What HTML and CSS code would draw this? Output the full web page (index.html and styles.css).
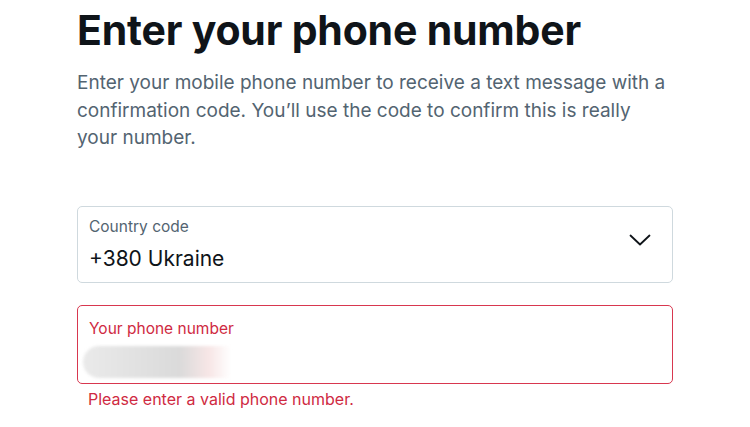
FILE: index.html
```html
<!DOCTYPE html>
<html lang="en">
<head>
  <meta charset="UTF-8" />
  <meta name="viewport" content="width=device-width, initial-scale=1.0" />
  <title>Enter your phone number</title>
  <link rel="stylesheet" href="styles.css">
</head>
<body>
  <div class="page">
    <h1 class="title">Enter your phone number</h1>
    <p class="lead">Enter your mobile phone number to receive a text message with a confirmation code. You’ll use the code to confirm this is really your number.</p>

    <!-- Country select -->
    <div class="field">
      <div class="field-body">
        <div class="field-label">Country code</div>
        <div class="field-value">+380 Ukraine</div>
      </div>
      <svg class="chevron" viewBox="0 0 24 24" width="24" height="24">
        <path d="M2.5 7.5 L12 16.5 L21.5 7.5" fill="none" stroke="#0f1419" stroke-width="1.8" stroke-linecap="round" stroke-linejoin="round"/>
      </svg>
    </div>

    <!-- Phone input (invalid) -->
    <div class="field field-error">
      <div class="field-body">
        <div class="field-label">Your phone number</div>
        <div class="field-value"><span class="masked"></span></div>
      </div>
    </div>
    <div class="error-msg">Please enter a valid phone number.</div>
  </div>
</body>
</html>
```

FILE: styles.css
```css
* { margin: 0; padding: 0; box-sizing: border-box; }
html, body {
  width: 100%;
  height: 100%;
  background: #fff;
  font-family: "Inter", "Roboto", sans-serif;
  color: #0f1419;
  overflow: hidden;
}
.page {
  width: 596px;
  margin-left: 77px;
  padding-top: 4px;
}
.title {
  font-size: 41px;
  font-weight: 700;
  line-height: 52px;
  letter-spacing: -0.2px;
}
.lead {
  margin-top: 13px;
  font-size: 19px;
  line-height: 27.5px;
  color: #536471;
}
.field {
  display: flex;
  align-items: center;
  height: 77px;
  margin-top: 54px;
  border: 1px solid #cfd9de;
  border-radius: 5px;
  padding: 0 20px 0 11px;
}
.field-body { flex: 1; }
.field-label {
  font-size: 15.5px;
  line-height: 20px;
  color: #536471;
}
.field-value {
  margin-top: 9px;
  font-size: 21px;
  line-height: 26px;
  height: 26px;
}
.chevron { margin-top: -8px; }
.field-error {
  margin-top: 22px;
  height: 79px;
  border-color: #d8374f;
  padding-top: 4px;
}
.field-error .field-label { color: #cf2a42; }
.masked {
  display: inline-block;
  width: 148px;
  height: 32px;
  margin-left: -6px;
  margin-top: -2px;
  border-radius: 16px 4px 4px 16px;
  background: linear-gradient(90deg, #eaeaea, #dadada 65%, #f7e6e6 85%, #fff);
  filter: blur(1.5px);
}
.error-msg {
  margin-top: 5px;
  padding-left: 11px;
  font-size: 16px;
  line-height: 20px;
  color: #cf2a42;
}
```
